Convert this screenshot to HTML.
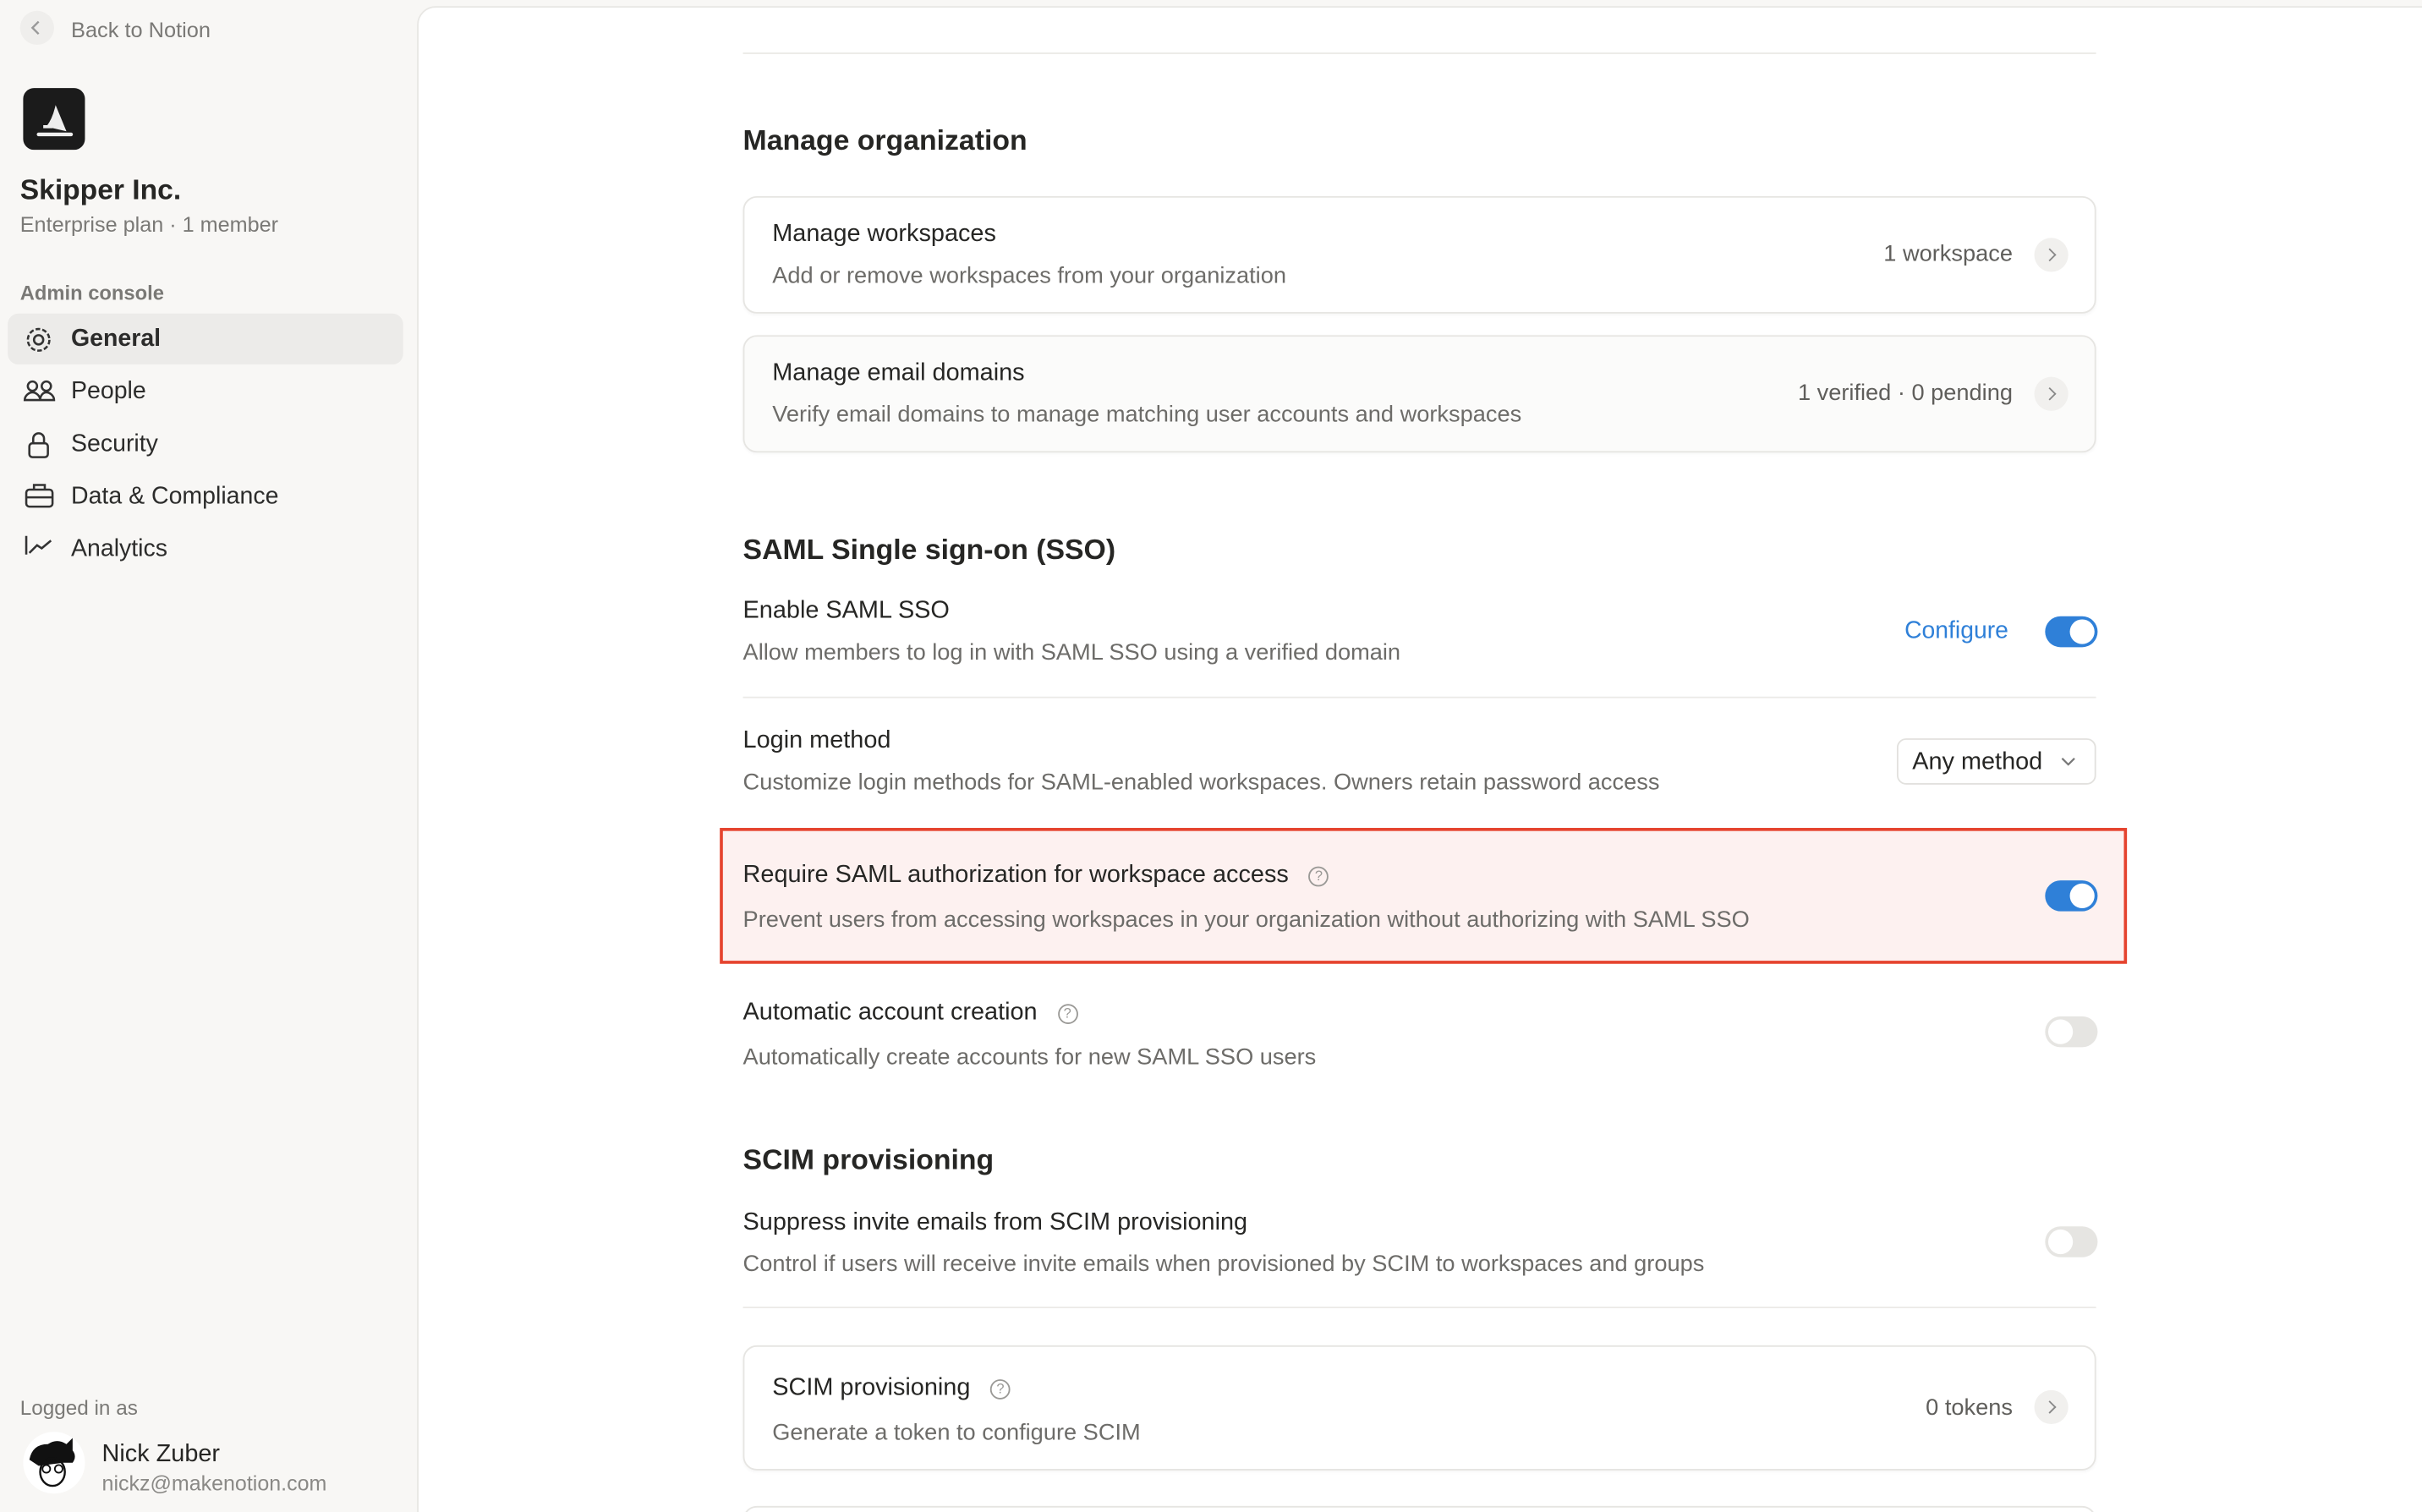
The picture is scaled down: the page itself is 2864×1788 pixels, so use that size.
<!DOCTYPE html>
<html><head><meta charset="utf-8"><style>
*{box-sizing:border-box;margin:0;padding:0}
html,body{width:2864px;height:1788px;overflow:hidden;background:#f8f7f5}
#w{width:1568px;height:979px;transform:scale(1.82653);transform-origin:0 0;position:relative;font-family:"Liberation Sans",sans-serif;color:#2c2c2b}
.a{position:absolute;white-space:nowrap}
.side{font-size:15.6px}
.main{position:absolute;left:270px;top:4px;width:1310px;height:990px;background:#fff;border:1px solid #e8e7e4;border-radius:12px}
.t{font-size:15.8px;color:#262624}
.d{font-size:14.9px;color:#6d6c69}
.h{font-size:18.5px;font-weight:bold;color:#262624}
.card{position:absolute;left:481px;width:876px;border:1px solid #e6e5e2;border-radius:9px;background:#fff;box-shadow:0 1px 2px rgba(0,0,0,.04)}
.chev{position:absolute;width:22px;height:22px;border-radius:11px;background:#f1f0ee}
.chev::after{content:"";position:absolute;left:7px;top:8px;width:5px;height:5px;border-top:1.3px solid #888;border-right:1.3px solid #888;transform:rotate(45deg)}
.tog{position:absolute;width:34px;height:20px;border-radius:10px;background:#2f80d8}
.tog::after{content:"";position:absolute;right:2px;top:2px;width:16px;height:16px;border-radius:8px;background:#fff}
.tog.off{background:#e6e5e2}.tog.off::after{left:2px;right:auto}
.sep{position:absolute;left:481px;width:876px;height:1px;background:#ebeae7}
.q{display:inline-block;width:13px;height:13px;border:1.2px solid #9a9996;border-radius:50%;font-size:9px;color:#9a9996;text-align:center;line-height:11px;margin-left:13px;vertical-align:1px;letter-spacing:0}
</style></head><body><div id="w">
<div class="a" style="left:13px;top:7px;width:22px;height:22px;border-radius:11px;background:#efeeec"></div>
<svg class="a" style="left:19px;top:12px" width="10" height="12"><path d="M6 2L2 6l4 4" fill="none" stroke="#999" stroke-width="1.3"/></svg>
<div class="a" style="left:46px;top:11px;font-size:13.9px;color:#7a7976">Back to Notion</div>
<div class="a" style="left:15px;top:57px;width:40px;height:40px;border-radius:7px;background:#1b1b1b"></div>
<svg class="a" style="left:15px;top:57px" width="40" height="40"><path d="M28 28L21 11Q19 20 15 25Z" fill="#eee"/><path d="M13 25l6 0" stroke="#eee" stroke-width="2"/><path d="M10 30h21" stroke="#eee" stroke-width="2.4" stroke-linecap="round"/></svg>
<div class="a" style="left:13px;top:112px;font-size:18.4px;font-weight:bold;color:#262624">Skipper Inc.</div>
<div class="a" style="left:13px;top:138px;font-size:13.8px;color:#7a7976">Enterprise plan · 1 member</div>
<div class="a" style="left:13px;top:182px;font-size:13px;color:#7a7976;font-weight:bold">Admin console</div>
<div class="a" style="left:5px;top:203px;width:256px;height:33px;border-radius:7px;background:#ecebe9"></div>
<svg class="a" style="left:15px;top:209px" width="22" height="150" fill="none" stroke="#333" stroke-width="1.4">
<circle cx="10" cy="11" r="3"/><circle cx="10" cy="11" r="7" stroke-dasharray="3 1.4"/>
<circle cx="6" cy="41" r="3"/><circle cx="15" cy="41" r="3"/><path d="M1 50c0-3 3-5 5-5s5 2 5 5zM11 50c0-3 2-5 4-5s5 2 5 5z"/>
<rect x="4" y="78" width="12" height="9" rx="2"/><path d="M6.5 78v-3a3.5 3.5 0 0 1 7 0v3"/>
<rect x="2" y="108" width="17" height="11" rx="2"/><path d="M7 108v-3h7v3M2 113h17"/>
<path d="M2 138v14h17M4 149l5-5 3 2 6-5"/></svg>
<div class="a side" style="left:46px;top:211px;font-weight:bold">General</div>
<div class="a side" style="left:46px;top:245px">People</div>
<div class="a side" style="left:46px;top:279px">Security</div>
<div class="a side" style="left:46px;top:313px">Data &amp; Compliance</div>
<div class="a side" style="left:46px;top:347px">Analytics</div>
<div class="a" style="left:13px;top:904px;font-size:13.3px;color:#7a7976">Logged in as</div>
<div class="a" style="left:15px;top:927px;width:40px;height:40px;border-radius:20px;background:#fff"></div>
<svg class="a" style="left:15px;top:927px" width="40" height="40"><path d="M4 18Q6 8 16 8q6-4 12 0l4-4v8q3 4 0 8l-6 0L10 22z" fill="#111"/><ellipse cx="19" cy="26" rx="8" ry="9" fill="none" stroke="#111" stroke-width="1.3"/><circle cx="15" cy="24" r="2.5" fill="none" stroke="#111"/><circle cx="23" cy="24" r="2.5" fill="none" stroke="#111"/></svg>
<div class="a" style="left:66px;top:933px;font-size:15.8px;color:#262624">Nick Zuber</div>
<div class="a" style="left:66px;top:953px;font-size:13.7px;color:#8a8986">nickz@makenotion.com</div>

<div class="main"></div>
<div class="sep" style="top:34px"></div>
<div class="a h" style="left:481px;top:80px">Manage organization</div>
<div class="card" style="top:127px;height:76px"></div>
<div class="a t" style="left:500px;top:143px">Manage workspaces</div>
<div class="a d" style="left:500px;top:171px">Add or remove workspaces from your organization</div>
<div class="a d" style="right:265px;top:157px;color:#5f5e5b">1 workspace</div>
<div class="chev" style="left:1317px;top:154px"></div>
<div class="card" style="top:217px;height:76px;background:#fbfbfa"></div>
<div class="a t" style="left:500px;top:233px">Manage email domains</div>
<div class="a d" style="left:500px;top:261px">Verify email domains to manage matching user accounts and workspaces</div>
<div class="a d" style="right:265px;top:247px;color:#5f5e5b">1 verified · 0 pending</div>
<div class="chev" style="left:1317px;top:244px"></div>

<div class="a h" style="left:481px;top:345px">SAML Single sign-on (SSO)</div>
<div class="a t" style="left:481px;top:387px">Enable SAML SSO</div>
<div class="a d" style="left:481px;top:415px">Allow members to log in with SAML SSO using a verified domain</div>
<div class="a" style="left:1233px;top:400px;font-size:15.5px;color:#2f80d8">Configure</div>
<div class="tog" style="left:1324px;top:399px"></div>
<div class="sep" style="top:451px"></div>
<div class="a t" style="left:481px;top:471px">Login method</div>
<div class="a d" style="left:481px;top:499px">Customize login methods for SAML-enabled workspaces. Owners retain password access</div>
<div class="a" style="left:1228px;top:478px;width:129px;height:30px;border:1px solid #e2e1de;border-radius:6px"></div>
<div class="a t" style="left:1238px;top:485px">Any method</div>
<svg class="a" style="left:1334px;top:489px" width="10" height="8"><path d="M1 2l4 4 4-4" fill="none" stroke="#777" stroke-width="1.2"/></svg>
<div class="a" style="left:466px;top:536px;width:911px;height:88px;background:#fdf1f0;border:2px solid #e5432e"></div>
<div class="a t" style="left:481px;top:558px">Require SAML authorization for workspace access<span class="q">?</span></div>
<div class="a d" style="left:481px;top:588px">Prevent users from accessing workspaces in your organization without authorizing with SAML SSO</div>
<div class="tog" style="left:1324px;top:570px"></div>
<div class="a t" style="left:481px;top:647px">Automatic account creation<span class="q">?</span></div>
<div class="a d" style="left:481px;top:677px">Automatically create accounts for new SAML SSO users</div>
<div class="tog off" style="left:1324px;top:658px"></div>
<div class="a h" style="left:481px;top:740px">SCIM provisioning</div>
<div class="a t" style="left:481px;top:783px">Suppress invite emails from SCIM provisioning</div>
<div class="a d" style="left:481px;top:811px">Control if users will receive invite emails when provisioned by SCIM to workspaces and groups</div>
<div class="tog off" style="left:1324px;top:794px"></div>
<div class="sep" style="top:846px"></div>
<div class="card" style="top:871px;height:81px"></div>
<div class="a t" style="left:500px;top:890px">SCIM provisioning<span class="q">?</span></div>
<div class="a d" style="left:500px;top:920px">Generate a token to configure SCIM</div>
<div class="a d" style="right:265px;top:904px;color:#5f5e5b">0 tokens</div>
<div class="chev" style="left:1317px;top:900px"></div>
<div class="card" style="top:975px;height:40px"></div>
</div></body></html>
